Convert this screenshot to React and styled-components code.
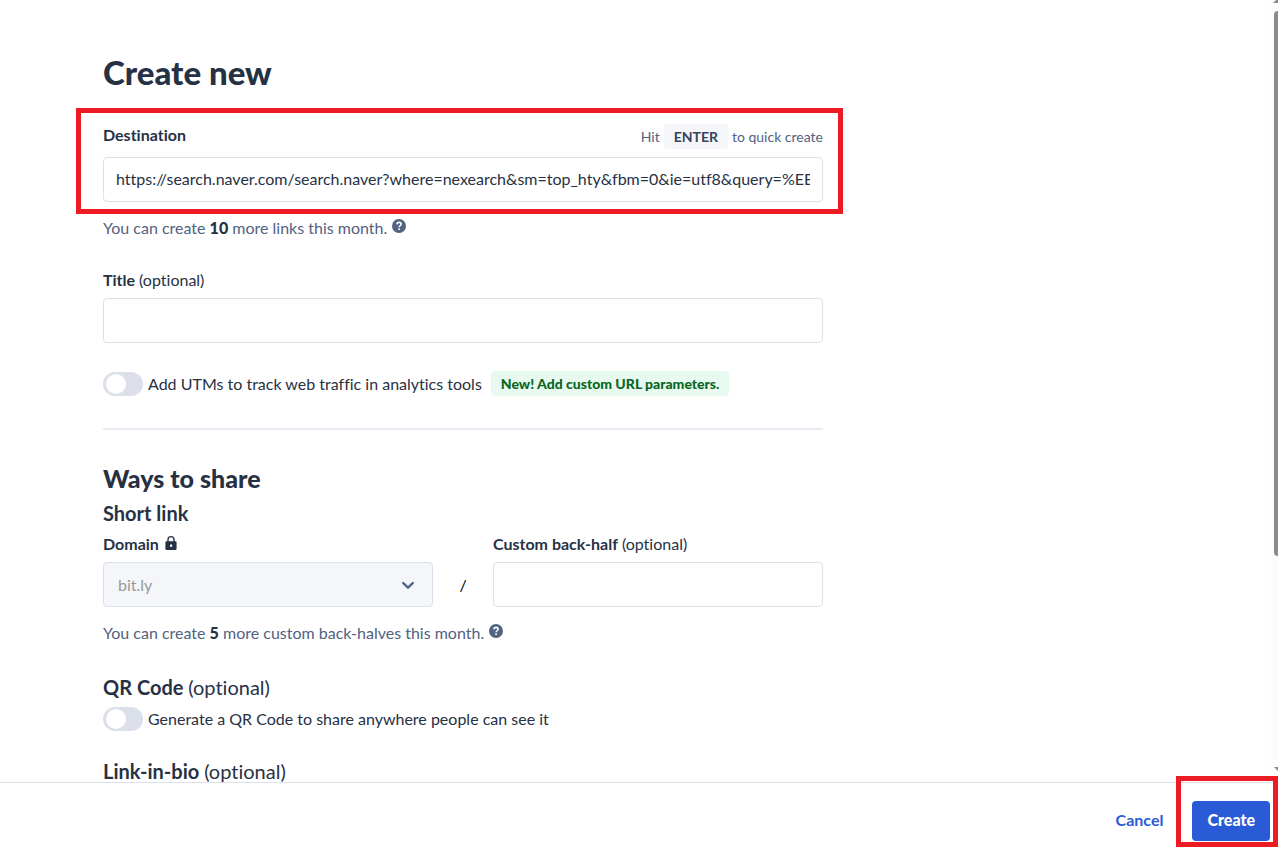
import React from "react";
import styled, { createGlobalStyle } from "styled-components";

const ink = "#273144";
const muted = "#526281";
const line = "#dbe0eb";
const blue = "#2a5bd7";

const GlobalStyle = createGlobalStyle`
  * { box-sizing: border-box; }
  html, body, #root { height: 100%; }
  body {
    margin: 0;
    background: #fff;
    color: ${ink};
    font-family: Lato, "Liberation Sans", sans-serif;
    font-size: 16px;
    line-height: 24px;
    font-variant-ligatures: no-common-ligatures;
  }
  input, select, button { font: inherit; color: inherit; font-variant-ligatures: inherit; }
`;

const Page = styled.div`
  display: grid;
  grid-template-rows: minmax(0, 1fr) auto;
  height: 100vh;
`;

const Viewport = styled.div`
  display: grid;
  grid-template-columns: minmax(0, 1fr) 7px;
  min-height: 0;
  overflow: hidden;
`;

const Form = styled.form`
  width: 100%;
  max-width: 926px;
  min-height: 0;
  padding: 52px 103px 0;
  overflow: hidden;
`;

const ScrollTrack = styled.div`
  display: flex;
  flex-direction: column;
  align-items: flex-end;
  padding-bottom: 10px;
  background: #fcfcfc;
  overflow: hidden;
`;

const ScrollArrow = styled.svg`
  display: block;
  flex: none;
  width: 5px;
  height: 6px;
  fill: #8b8b8b;
`;

const ScrollRail = styled.div`
  flex: 1;
  width: 4px;
  padding: 5px 0;
`;

const ScrollThumb = styled.div`
  height: calc(100% * 8 / 11);
  background: #8b8b8b;
  border-radius: 4px 0 0 4px;
`;

const PageTitle = styled.h1`
  margin: 0 0 32px;
  font-size: 33px;
  line-height: 40px;
  font-weight: 900;
`;

const SectionTitle = styled.h2`
  margin: 0 0 7px;
  font-size: 25px;
  line-height: 32px;
  font-weight: 900;
`;

const GroupTitle = styled.h3`
  margin: 0 0 8px;
  font-size: 20px;
  line-height: 24px;
  font-weight: 700;
`;

const Optional = styled.span`
  font-weight: 400;
`;

const Highlighted = styled.div`
  position: relative;
`;

const Marker = styled.span`
  position: absolute;
  inset: ${(p) => p.$inset};
  border: 5px solid #ed1c24;
  pointer-events: none;
`;

const LabelRow = styled.div`
  display: flex;
  justify-content: space-between;
  margin-bottom: 8px;
`;

const Label = styled.label`
  display: flex;
  gap: 4px;
  height: 24px;
  line-height: 22px;
  font-weight: 700;
`;

const Hint = styled.div`
  display: flex;
  align-items: center;
  gap: 4px;
  height: 25px;
  font-size: 14px;
  color: ${muted};
`;

const Key = styled.kbd`
  padding: 0 10px;
  border-radius: 4px;
  background: #f4f6fa;
  color: #36435c;
  font-family: inherit;
  font-weight: 700;
  line-height: 25px;
`;

const TextInput = styled.input`
  display: block;
  width: 100%;
  height: 45px;
  padding: 0 12px 2px;
  border: 1px solid ${line};
  border-radius: 4px;
  background: #fff;
  outline: none;
`;

const Field = styled.div`
  display: flex;
  flex-direction: column;
  gap: 5px;
`;

const Quota = styled.p`
  display: flex;
  gap: 5px;
  margin: 14px 0 ${(p) => p.$after};
  color: ${muted};

  strong { color: ${ink}; font-weight: 900; }
  svg { margin-top: 3px; }
`;

const SwitchRow = styled.div`
  display: flex;
  align-items: center;
  gap: 5px;
  margin: ${(p) => p.$margin};
`;

const Switch = styled.input`
  appearance: none;
  flex: none;
  width: 40px;
  height: 24px;
  margin: 0;
  padding: 2px 3px;
  border-radius: 12px;
  background: ${line};

  &::before {
    content: "";
    display: block;
    width: 20px;
    height: 20px;
    border-radius: 50%;
    background: #fff;
  }
`;

const Badge = styled.span`
  margin-left: 4px;
  padding: 0 10px;
  border-radius: 4px;
  background: #e8faef;
  color: #0a6624;
  font-size: 14px;
  line-height: 25px;
  font-weight: 900;
`;

const Divider = styled.hr`
  height: 2px;
  margin: 0 0 32px;
  border: 0;
  background: #e8ebf2;
`;

const LinkGrid = styled.div`
  display: grid;
  grid-template-columns: minmax(0, 1fr) 60px minmax(0, 1fr);
  align-items: end;
`;

const Slash = styled.span`
  height: 45px;
  line-height: 46px;
  text-align: center;
  color: #000;
`;

const SelectBox = styled.div`
  position: relative;

  svg { position: absolute; right: 18px; top: 16px; }
`;

const Select = styled.select`
  appearance: none;
  display: block;
  width: 100%;
  height: 45px;
  padding: 0 14px;
  border: 1px solid ${line};
  border-radius: 4px;
  background: #f4f6fa;
  &:disabled { color: #999; opacity: 1; }
`;

const Footer = styled.footer`
  display: flex;
  justify-content: flex-end;
  align-items: center;
  gap: 14px;
  height: 72px;
  padding: 4px 8px 0 0;
  border-top: 1px solid ${line};
  background: #fff;
`;

const Button = styled.button`
  height: 40px;
  padding: 0 15px 2px;
  border: 0;
  border-radius: 4px;
  background: ${(p) => (p.$primary ? blue : "transparent")};
  color: ${(p) => (p.$primary ? "#fff" : blue)};
  font-weight: ${(p) => (p.$primary ? 900 : 700)};
`;

const HelpIcon = () => (
  <svg width="14" height="14" viewBox="0 0 14 14" aria-hidden="true">
    <circle cx="7" cy="7" r="7" fill={muted} />
    <path d="M4.9 5.4C5 4.1 5.8 3.4 7 3.4s2.1.7 2.1 1.8c0 1.5-2 1.6-2 3.1" fill="none" stroke="#fff" strokeWidth="1.6" />
    <rect x="6.2" y="9.4" width="1.7" height="1.6" fill="#fff" />
  </svg>
);

const LockIcon = () => (
  <svg width="16" height="20" viewBox="0 0 16 20" aria-hidden="true">
    <path d="M5 9V6.6a3 3 0 0 1 6 0V9" fill="none" stroke={ink} strokeWidth="1.4" />
    <rect x="2.4" y="8.2" width="11.2" height="8.8" rx="1.2" fill={ink} />
    <rect x="7" y="11.6" width="2.2" height="2.2" rx=".5" fill="#fff" />
  </svg>
);

const Chevron = () => (
  <svg width="14" height="14" viewBox="0 0 14 14" aria-hidden="true">
    <path d="M2.2 5 7 9.6 11.8 5" fill="none" stroke={muted} strokeWidth="2.4" strokeLinecap="round" strokeLinejoin="round" />
  </svg>
);

const destination =
  "https://search.naver.com/search.naver?where=nexearch&sm=top_hty&fbm=0&ie=utf8&query=%EB%B9%84";

export default function App() {
  return (
    <>
      <GlobalStyle />
      <Page>
        <Viewport>
          <Form id="create">
            <PageTitle>Create new</PageTitle>
            <Highlighted>
              <LabelRow>
                <Label htmlFor="destination">Destination</Label>
                <Hint>
                  Hit <Key>ENTER</Key> to quick create
                </Hint>
              </LabelRow>
              <TextInput id="destination" defaultValue={destination} />
              <Marker $inset="-16px -20px -12px -27px" />
            </Highlighted>
            <Quota $after="29px">
              <span>You can create <strong>10</strong> more links this month.</span>
              <HelpIcon />
            </Quota>
            <Field>
              <Label htmlFor="title">Title <Optional>(optional)</Optional></Label>
              <TextInput id="title" />
            </Field>
            <SwitchRow $margin="28px 0 32px">
              <Switch type="checkbox" role="switch" id="utm" />
              <label htmlFor="utm">Add UTMs to track web traffic in analytics tools</label>
              <Badge>New! Add custom URL parameters.</Badge>
            </SwitchRow>
            <Divider />
            <SectionTitle>Ways to share</SectionTitle>
            <GroupTitle>Short link</GroupTitle>
            <LinkGrid>
              <Field>
                <Label htmlFor="domain">Domain <LockIcon /></Label>
                <SelectBox>
                  <Select id="domain" disabled defaultValue="bit.ly">
                    <option>bit.ly</option>
                  </Select>
                  <Chevron />
                </SelectBox>
              </Field>
              <Slash>/</Slash>
              <Field>
                <Label htmlFor="backhalf">Custom back-half <Optional>(optional)</Optional></Label>
                <TextInput id="backhalf" />
              </Field>
            </LinkGrid>
            <Quota $after="30px">
              <span>You can create <strong>5</strong> more custom back-halves this month.</span>
              <HelpIcon />
            </Quota>
            <GroupTitle>QR Code <Optional>(optional)</Optional></GroupTitle>
            <SwitchRow $margin="0 0 28px">
              <Switch type="checkbox" role="switch" id="qr" />
              <label htmlFor="qr">Generate a QR Code to share anywhere people can see it</label>
            </SwitchRow>
            <GroupTitle>Link-in-bio <Optional>(optional)</Optional></GroupTitle>
          </Form>
          <ScrollTrack aria-hidden="true">
            <ScrollArrow viewBox="0 0 5 6"><path d="M0 3 3 0h2v3z" /></ScrollArrow>
            <ScrollRail><ScrollThumb /></ScrollRail>
            <ScrollArrow viewBox="0 0 5 6"><path d="M1 1h4v4z" /></ScrollArrow>
          </ScrollTrack>
        </Viewport>
        <Footer>
          <Button type="button">Cancel</Button>
          <Highlighted>
            <Button type="submit" form="create" $primary>Create</Button>
            <Marker $inset="-25px -8px -6px -16px" />
          </Highlighted>
        </Footer>
      </Page>
    </>
  );
}
